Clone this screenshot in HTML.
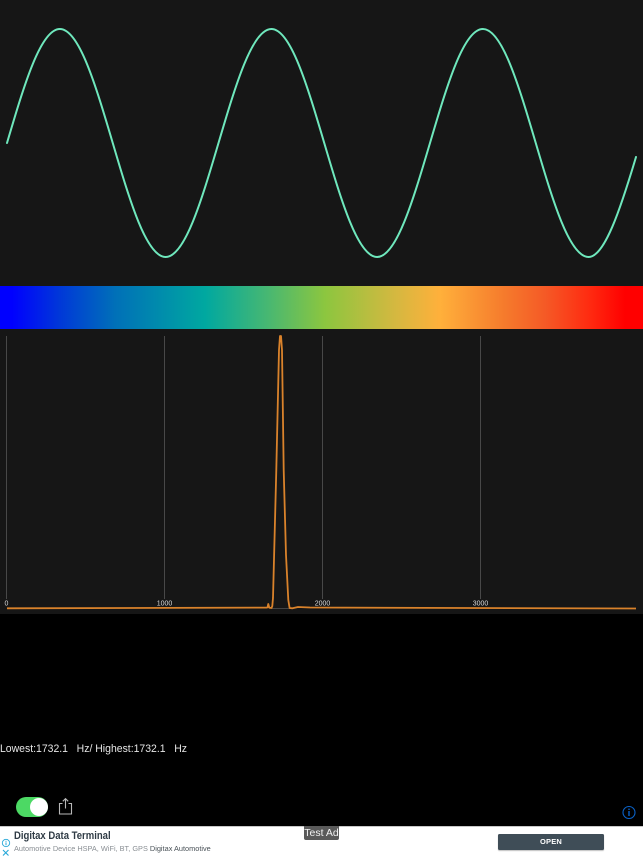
<!DOCTYPE html>
<html>
<head>
<meta charset="utf-8">
<style>
html,body{margin:0;padding:0;background:#000;}
body{width:643px;height:858px;position:relative;overflow:hidden;font-family:"Liberation Sans",sans-serif;}
.abs{position:absolute;white-space:pre;}
#panel{position:absolute;left:0;top:0;width:643px;height:614px;background:#161616;}
#grad{position:absolute;left:0;top:286px;width:643px;height:43px;background:linear-gradient(to right,#0000ff 0,#0000ff 12px,#0038d8 60px,#0070b8 115px,#00a8a0 205px,#4ab870 270px,#8cc63f 325px,#d4b840 395px,#ffb03b 440px,#f57a2c 505px,#f55a26 545px,#ff2a10 590px,#ff0000 625px,#ff0000 643px);}
svg{position:absolute;left:0;top:0;}
#ad{position:absolute;left:0;top:826px;width:643px;height:32px;background:#fff;border-top:1px solid #c8c8c8;box-sizing:border-box;}
</style>
</head>
<body>
<div id="panel"></div>
<div id="grad"></div>
<svg width="643" height="858" viewBox="0 0 643 858">
  <path d="M7,143 c17.25,-58.4 33.74,-114 52.875,-114 c19.13,0 35.62,55.6 52.875,114 c17.25,58.4 33.74,114 52.875,114 c19.13,0 35.62,-55.6 52.875,-114 c17.25,-58.4 33.74,-114 52.875,-114 c19.13,0 35.62,55.6 52.875,114 c17.25,58.4 33.74,114 52.875,114 c19.13,0 35.62,-55.6 52.875,-114 c17.25,-58.4 33.74,-114 52.875,-114 c19.13,0 35.62,55.6 52.875,114 c17.25,58.4 33.74,114 52.875,114 C604.4,257 620.2,209.8 636,157" fill="none" stroke="#6fe8bd" stroke-width="2" stroke-linejoin="round" stroke-linecap="round"/>
  <g stroke="#484848" stroke-width="1">
    <line x1="6.5" y1="336" x2="6.5" y2="599"/>
    <line x1="164.5" y1="336" x2="164.5" y2="599"/>
    <line x1="322.5" y1="336" x2="322.5" y2="599"/>
    <line x1="480.5" y1="336" x2="480.5" y2="599"/>
  </g>
  <line x1="272" y1="608.5" x2="292" y2="608.5" stroke="#444" stroke-width="1"/>
  <path d="M7,608.3 L266.5,607.6 L267.5,607.4 L268.3,604 L269.3,607.7 L271.5,608 L272.3,606 L273,598 L276.3,470 L279,350 L280,336 L281,336 L282,350 L283.7,470 L286,555 L288.3,600 L289.6,608 L292.5,608.3 L298,607 L310,607.5 L636,608.5" fill="none" stroke="#d9822b" stroke-width="1.8" stroke-linejoin="round"/>
  <g fill="#d8d8d8" font-family="Liberation Sans, sans-serif" font-size="7" text-anchor="middle">
    <text x="6.5" y="605.5">0</text>
    <text x="164.5" y="605.5">1000</text>
    <text x="322.5" y="605.5">2000</text>
    <text x="480.5" y="605.5">3000</text>
  </g>
  <!-- share icon -->
  <g fill="none" stroke="#b8b8b8" stroke-width="1.1">
    <path d="M62.5,803.5 H59.5 V814 H71.5 V803.5 H68.5"/>
    <path d="M65.5,808.5 V799 M62.8,801.3 L65.5,798.6 L68.2,801.3"/>
  </g>
  <!-- info icon -->
  <circle cx="629" cy="812.5" r="6" fill="none" stroke="#0a62c8" stroke-width="1.1"/>
  <rect x="628.3" y="811" width="1.4" height="5" fill="#0a62c8"/>
  <rect x="628.3" y="808.6" width="1.4" height="1.4" fill="#0a62c8"/>
</svg>

<div class="abs" style="left:0;top:742px;font-size:11.3px;line-height:14px;color:#e6e6e6;transform:scaleX(.925);transform-origin:0 0;">Lowest:1732.1   Hz/ Highest:1732.1   Hz</div>

<!-- toggle -->
<div class="abs" style="left:16px;top:797px;width:32px;height:20px;border-radius:10px;background:#4cd964;"></div>
<div class="abs" style="left:30px;top:798px;width:18px;height:18px;border-radius:9px;background:#fff;"></div>

<div id="ad"></div>
<div class="abs" style="left:14px;top:830px;font-size:11px;line-height:13px;color:#2f3b45;font-weight:bold;transform:scaleX(.865);transform-origin:0 0;">Digitax Data Terminal</div>
<div class="abs" style="left:14px;top:843px;font-size:7.6px;line-height:11px;color:#8a8f94;transform:scaleX(.968);transform-origin:0 0;">Automotive Device HSPA, WiFi, BT, GPS <span style="color:#4a5258;">Digitax Automotive</span></div>
<svg width="643" height="858" viewBox="0 0 643 858" style="pointer-events:none">
  <circle cx="6" cy="843" r="3.7" fill="none" stroke="#27a8d8" stroke-width=".9"/>
  <rect x="5.5" y="842.4" width="1" height="2.8" fill="#27a8d8"/>
  <rect x="5.5" y="840.8" width="1" height="1" fill="#27a8d8"/>
  <path d="M3,850 L8.5,855.5 M8.5,850 L3,855.5" stroke="#27a8d8" stroke-width="1.1" fill="none"/>
</svg>
<div class="abs" style="left:304px;top:826px;width:35px;height:14px;background:#5a5a5a;border-radius:0 0 2px 2px;color:#f2f2f2;font-size:10.5px;line-height:14px;text-align:center;">Test Ad</div>
<div class="abs" style="left:498px;top:834px;width:106px;height:16px;background:#3f4d57;border-radius:1.5px;color:#fff;font-size:7.5px;line-height:16px;font-weight:bold;text-align:center;box-shadow:0 1px 1px rgba(0,0,0,.25);letter-spacing:.2px;">OPEN</div>
</body>
</html>
